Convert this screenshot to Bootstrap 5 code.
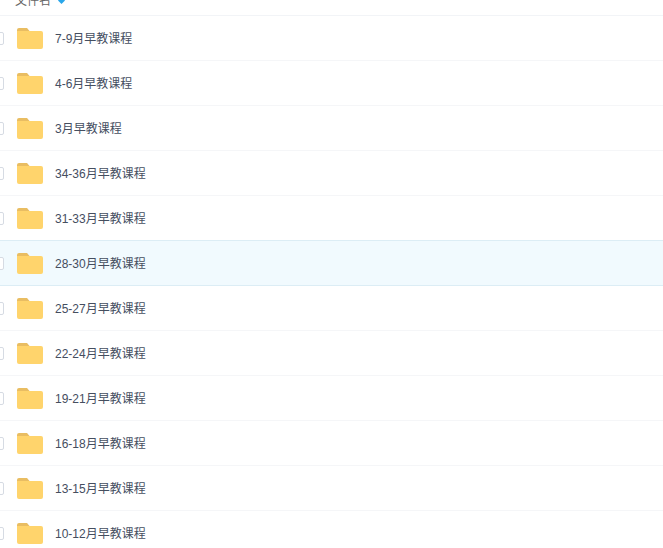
<!DOCTYPE html>
<html lang="zh">
<head>
<meta charset="utf-8">
<title>文件列表</title>
<link rel="stylesheet" href="https://cdn.jsdelivr.net/npm/bootstrap@5.3.0/dist/css/bootstrap.min.css">
<style>
html,body{height:548px;overflow:hidden;background:#fff}
body{font-family:"Liberation Sans","Noto Sans CJK SC",sans-serif;font-size:12px;color:#454e5f}
.file-head{margin-top:-14px;height:30px;border-bottom:1px solid #f2f4f7;padding-left:15px;line-height:12px;color:#666;gap:7px}
.file-row{height:46px;padding-top:1px;border-bottom:1px solid #f5f6f8;border-top:1px solid transparent;margin-top:-1px}
.file-row.hot{background:#f1fafe;border-color:#dcedf5}
.tick{width:13px;height:13px;flex:none;margin-left:-9px;border:1px solid #d6dbe3;border-radius:2px;background:#fff}
.folder{flex:none;width:26px;height:21px;margin-left:13px;margin-right:12px}
.file-name{padding-top:1px}
.sort-arrow{width:7px;height:7px;flex:none;margin-top:-1px}
</style>
</head>
<body>
<svg width="0" height="0" class="d-block"><symbol id="fd" viewBox="0 0 26 21"><path d="M0 2a2 2 0 0 1 2-2h8l3 3.500H0z" fill="#e9bd62"/><path d="M0 3h24a2 2 0 0 1 2 2v14a2 2 0 0 1-2 2H2a2 2 0 0 1-2-2z" fill="#ffd46c"/></symbol></svg>
<div class="d-flex align-items-center file-head"><span>文件名</span><svg class="sort-arrow" viewBox="0 0 8 8"><path d="M4 0l4 4-4 4-4-4z" fill="#2aa7ea"/></svg></div>
<div class="d-flex align-items-center file-row"><span class="tick"></span><svg class="folder"><use href="#fd"/></svg><span class="file-name">7-9月早教课程</span></div>
<div class="d-flex align-items-center file-row"><span class="tick"></span><svg class="folder"><use href="#fd"/></svg><span class="file-name">4-6月早教课程</span></div>
<div class="d-flex align-items-center file-row"><span class="tick"></span><svg class="folder"><use href="#fd"/></svg><span class="file-name">3月早教课程</span></div>
<div class="d-flex align-items-center file-row"><span class="tick"></span><svg class="folder"><use href="#fd"/></svg><span class="file-name">34-36月早教课程</span></div>
<div class="d-flex align-items-center file-row"><span class="tick"></span><svg class="folder"><use href="#fd"/></svg><span class="file-name">31-33月早教课程</span></div>
<div class="d-flex align-items-center file-row hot"><span class="tick"></span><svg class="folder"><use href="#fd"/></svg><span class="file-name">28-30月早教课程</span></div>
<div class="d-flex align-items-center file-row"><span class="tick"></span><svg class="folder"><use href="#fd"/></svg><span class="file-name">25-27月早教课程</span></div>
<div class="d-flex align-items-center file-row"><span class="tick"></span><svg class="folder"><use href="#fd"/></svg><span class="file-name">22-24月早教课程</span></div>
<div class="d-flex align-items-center file-row"><span class="tick"></span><svg class="folder"><use href="#fd"/></svg><span class="file-name">19-21月早教课程</span></div>
<div class="d-flex align-items-center file-row"><span class="tick"></span><svg class="folder"><use href="#fd"/></svg><span class="file-name">16-18月早教课程</span></div>
<div class="d-flex align-items-center file-row"><span class="tick"></span><svg class="folder"><use href="#fd"/></svg><span class="file-name">13-15月早教课程</span></div>
<div class="d-flex align-items-center file-row"><span class="tick"></span><svg class="folder"><use href="#fd"/></svg><span class="file-name">10-12月早教课程</span></div>
</body>
</html>
